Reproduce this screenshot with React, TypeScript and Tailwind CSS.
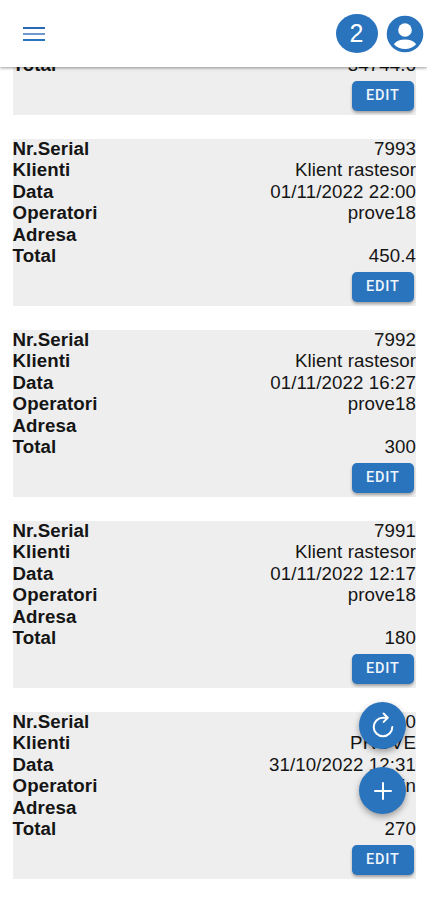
import React from 'react';

type Invoice = { serial: string; client: string; date: string; operator: string; total: string };

const invoices: Invoice[] = [
  { serial: '7993', client: 'Klient rastesor', date: '01/11/2022 22:00', operator: 'prove18', total: '450.4' },
  { serial: '7992', client: 'Klient rastesor', date: '01/11/2022 16:27', operator: 'prove18', total: '300' },
  { serial: '7991', client: 'Klient rastesor', date: '01/11/2022 12:17', operator: 'prove18', total: '180' },
  { serial: '7990', client: 'PROVE', date: '31/10/2022 12:31', operator: 'admin', total: '270' },
];

function Row({ label, value }: { label: string; value: string }) {
  return (
    <div className="flex h-[21.4px] shrink-0 items-start justify-between leading-[20.6px]">
      <span className="font-bold">{label}</span>
      <span className="-mr-[0.5px]">{value}</span>
    </div>
  );
}

function EditButton() {
  return (
    <div className="flex shrink-0 justify-end pt-[4.6px] pr-[2px] pb-[4px]">
      <button className="h-[30px] w-[61.5px] rounded-[5px] bg-[#2a73bd] font-[Roboto,sans-serif] text-[14.5px] leading-[30px] font-medium tracking-[0.8px] text-[#eef5fc] shadow-[0_2px_3px_rgba(0,0,0,0.32)]">
        EDIT
      </button>
    </div>
  );
}

function Card({ invoice }: { invoice: Invoice }) {
  return (
    <section className="h-[167px] shrink-0 bg-[#eeeeee]">
      <Row label="Nr.Serial" value={invoice.serial} />
      <Row label="Klienti" value={invoice.client} />
      <Row label="Data" value={invoice.date} />
      <Row label="Operatori" value={invoice.operator} />
      <Row label="Adresa" value="" />
      <Row label="Total" value={invoice.total} />
      <EditButton />
    </section>
  );
}

export default function App() {
  return (
    <div className="relative flex h-[900px] w-full flex-col overflow-hidden bg-white font-['Liberation_Sans',Arial,sans-serif] text-[18.7px] tracking-[0.1px] text-[#151515]">
      <header className="z-10 flex h-[67px] shrink-0 items-center bg-white pr-[3.500px] pl-[23px] shadow-[0_1px_3px_rgba(0,0,0,0.4)]">
        <button aria-label="Menu" className="flex w-[22px] flex-col gap-[4px]">
          <span className="h-[2px] bg-[#2a68b8]" />
          <span className="h-[2px] bg-[#6f98cf]" />
          <span className="h-[2px] bg-[#2a73bd]" />
        </button>
        <div className="ml-auto flex h-[39px] w-[42px] items-center justify-center rounded-[50%] bg-[#2a73bd] text-[25px] leading-none tracking-normal text-white">
          2
        </div>
        <svg viewBox="0 0 38 38" className="ml-[8px] h-[38px] w-[38px]" aria-label="Account">
          <circle cx="19" cy="19" r="18.3" fill="#2a73bd" />
          <circle cx="19" cy="15" r="6.8" fill="#fff" />
          <path d="M7.800 29.200C10.400 25.800 14.500 24.600 19 24.600s8.600 1.200 11.200 4.600C27.400 32.200 23.400 34 19 34S10.600 32.200 7.800 29.200Z" fill="#fff" />
        </svg>
      </header>
      <main className="flex h-[833px] shrink-0 flex-col gap-[24px] overflow-hidden pr-[11.500px] pl-[12.500px]">
        <section className="flex h-[48px] shrink-0 flex-col justify-end bg-[#eeeeee]">
          <Row label="Total" value="34744.6" />
          <EditButton />
        </section>
        {invoices.map((invoice) => (
          <Card key={invoice.serial} invoice={invoice} />
        ))}
      </main>
      <div className="absolute right-[21px] bottom-[86px] z-20 flex flex-col gap-[18px]">
        <button aria-label="Refresh" className="flex h-[47px] w-[47px] items-center justify-center rounded-full bg-[#2a73bd] shadow-[0_3px_6px_rgba(0,0,0,0.35)]">
          <svg viewBox="0 0 24 28" className="h-[28px] w-[24px]" fill="none" stroke="#fff" strokeWidth="2" strokeLinecap="round" strokeLinejoin="round">
            <path d="M21.300 15A9.300 9.300 0 1 1 12 5.700h4.500M12.600 1.500 16.800 5.700l-4.200 4.200" />
          </svg>
        </button>
        <button aria-label="Add" className="flex h-[47px] w-[47px] items-center justify-center rounded-full bg-[#2a73bd] shadow-[0_3px_6px_rgba(0,0,0,0.35)]">
          <svg viewBox="0 0 18 18" className="h-[18px] w-[18px]" stroke="#fff" strokeWidth="2" strokeLinecap="round">
            <path d="M9 1v16M1 9h16" />
          </svg>
        </button>
      </div>
    </div>
  );
}
